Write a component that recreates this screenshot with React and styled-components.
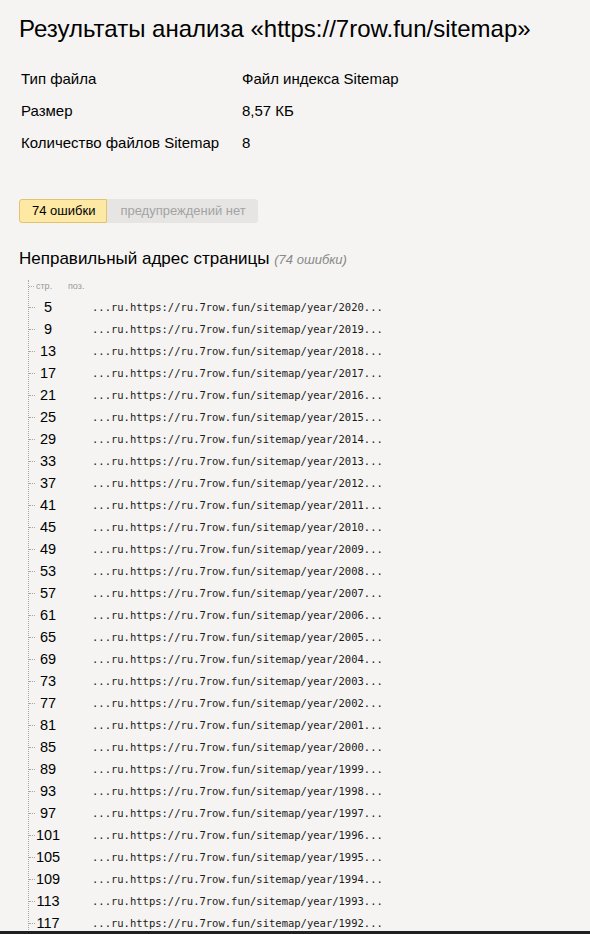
import React from 'react';
import styled, { createGlobalStyle } from 'styled-components';

const GlobalStyle = createGlobalStyle`
	html, body {
		margin: 0;
		padding: 0;
		background: #f5f4f2;
	}
	body {
		font-family: 'Liberation Sans', Arial, sans-serif;
		color: #000;
	}
`;

const Page = styled.div`
	padding: 14px 19px 0 19px;
	height: 917px;
	overflow: hidden;
`;

const Title = styled.h1`
	margin: 0;
	font-size: 24px;
	font-weight: normal;
	line-height: 30px;
`;

const InfoTable = styled.div`
	display: grid;
	grid-template-columns: 221px auto;
	margin-top: 19px;
	padding-left: 2px;
	font-size: 15px;
	line-height: 32px;
`;

const Tabs = styled.div`
	display: flex;
	margin-top: 40px;
	font-size: 13px;
	line-height: 22px;
`;

const Tab = styled.div`
	padding: 0 11px 0 12px;
	border: 1px solid ${(p) => (p.active ? '#e3c46e' : '#e6e5e3')};
	background: ${(p) => (p.active ? '#fde9a3' : '#e6e5e3')};
	color: ${(p) => (p.active ? '#000' : '#a3a3a3')};
	border-radius: ${(p) => (p.active ? '3px 0 0 3px' : '0 3px 3px 0')};
`;

const Section = styled.h2`
	margin: 24px 0 0 0;
	font-size: 17px;
	font-weight: normal;
	line-height: 24px;
`;

const Count = styled.span`
	font-size: 13px;
	font-style: italic;
	color: #888;
`;

const List = styled.div`
	margin: 8px 0 0 9px;
	border-left: 1px dotted #a8a8a8;
`;

const Head = styled.div`
	display: flex;
	height: 16px;
	font-size: 9px;
	color: #999;
	line-height: 12px;
`;

const HeadCell = styled.span`
	width: ${(p) => p.w}px;
	&:first-child::before {
		content: '';
		display: inline-block;
		width: 5px;
		margin-right: 2px;
		vertical-align: middle;
		border-top: 1px dotted #a8a8a8;
	}
`;

const Row = styled.div`
	display: flex;
	align-items: center;
	height: 22px;
`;

const Tick = styled.span`
	width: 6px;
	border-top: 1px dotted #a8a8a8;
`;

const Line = styled.span`
	width: 26px;
	text-align: center;
	font-size: 14.5px;
	color: #000;
`;

const Url = styled.span`
	margin-left: 31px;
	font-family: 'DejaVu Sans Mono', 'Liberation Mono', monospace;
	font-size: 10.5px;
	color: #1a1a1a;
`;

const BottomBar = styled.div`
	position: fixed;
	left: 0;
	right: 0;
	bottom: 0;
	height: 3px;
	background: #202020;
`;

const rows = Array.from({ length: 29 }, (_, i) => ({
	line: 5 + i * 4,
	year: 2020 - i,
}));

const App = () => {
	return (
		<>
			<GlobalStyle />
			<Page>
				<Title>Результаты анализа «https://7row.fun/sitemap»</Title>
				<InfoTable>
					<span>Тип файла</span>
					<span>Файл индекса Sitemap</span>
					<span>Размер</span>
					<span>8,57 КБ</span>
					<span>Количество файлов Sitemap</span>
					<span>8</span>
				</InfoTable>
				<Tabs>
					<Tab active>74 ошибки</Tab>
					<Tab>предупреждений нет</Tab>
				</Tabs>
				<Section>
					Неправильный адрес страницы <Count>(74 ошибки)</Count>
				</Section>
				<List>
					<Head>
						<HeadCell w={39}>стр.</HeadCell>
						<HeadCell w={30}>поз.</HeadCell>
					</Head>
					{rows.map((r) => (
						<Row key={r.line}>
							<Tick />
							<Line>{r.line}</Line>
							<Url>...ru.https://ru.7row.fun/sitemap/year/{r.year}...</Url>
						</Row>
					))}
				</List>
			</Page>
			<BottomBar />
		</>
	);
};

export default App;
